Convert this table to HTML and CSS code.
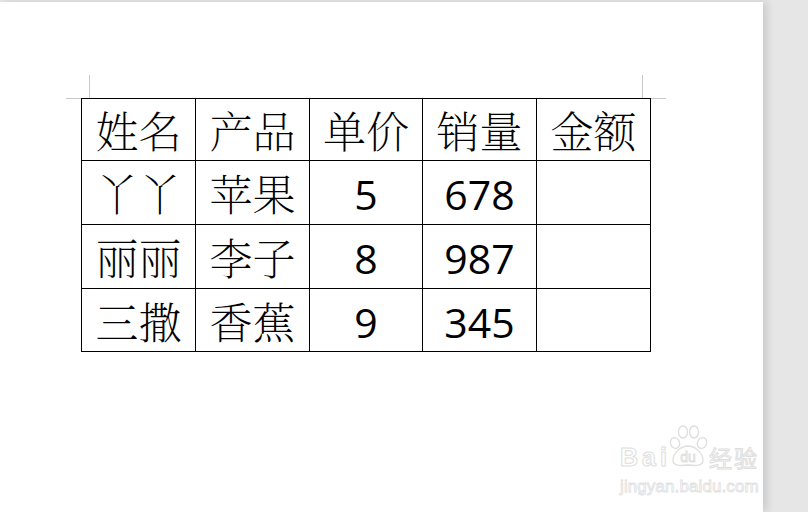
FILE: index.html
```html
<!DOCTYPE html>
<html lang="zh-CN">
<head>
<meta charset="utf-8">
<link rel="stylesheet" href="styles.css">
</head>
<body>
<div class="page">
  <div class="table-wrap">
    <span class="crop crop-lv"></span>
    <span class="crop crop-lh"></span>
    <span class="crop crop-rv"></span>
    <span class="crop crop-rh"></span>
    <table class="grid">
      <colgroup>
        <col class="c114"><col class="c114"><col class="c113"><col class="c114"><col class="c114">
      </colgroup>
      <tr class="row-head">
        <td class="zh">姓名</td><td class="zh">产品</td><td class="zh">单价</td><td class="zh">销量</td><td class="zh">金额</td>
      </tr>
      <tr>
        <td class="zh">丫丫</td><td class="zh">苹果</td><td class="num">5</td><td class="num">678</td><td></td>
      </tr>
      <tr>
        <td class="zh">丽丽</td><td class="zh">李子</td><td class="num">8</td><td class="num">987</td><td></td>
      </tr>
      <tr class="row-last">
        <td class="zh">三撒</td><td class="zh">香蕉</td><td class="num">9</td><td class="num">345</td><td></td>
      </tr>
    </table>
  </div>
  <div class="watermark">
    <div class="wm-top">
      <span class="wm-bai">Bai</span>
      <svg class="paw" width="42" height="44" viewBox="0 0 42 44">
        <g fill="#fff" stroke="#dedede" stroke-width="1.3">
          <ellipse cx="8" cy="19" rx="4.5" ry="5.5" transform="rotate(-20 8 19)"/>
          <ellipse cx="16" cy="8" rx="4.5" ry="6"/>
          <ellipse cx="27" cy="8" rx="4.5" ry="6"/>
          <ellipse cx="35" cy="19" rx="4.5" ry="5.5" transform="rotate(20 35 19)"/>
          <path d="M6 36 C6 29 14 22 21 22 C28 22 36 29 36 36 C36 42 29 42 21 41 C13 42 6 42 6 36 Z"/>
        </g>
        <text x="21" y="38" text-anchor="middle" class="du-text">du</text>
      </svg>
      <span class="wm-jy">经验</span>
    </div>
    <div class="wm-url">jingyan.baidu.com</div>
  </div>
</div>
</body>
</html>
```
FILE: styles.css
```css
html, body {
  margin: 0;
  padding: 0;
}
body {
  background: #e6e6e6;
  width: 808px;
  height: 512px;
  overflow: hidden;
}
.page {
  position: relative;
  margin-top: 2px;
  width: 763px;
  height: 510px;
  background: #ffffff;
  box-shadow: 4px 0 8px rgba(0,0,0,0.12);
  padding: 96px 0 0 81px;
  box-sizing: border-box;
}
.table-wrap {
  position: relative;
  width: 570px;
}
.grid {
  border-collapse: collapse;
  table-layout: fixed;
  width: 570px;
}
.c114 { width: 114px; }
.c113 { width: 113px; }
.grid td {
  border: 1px solid #000;
  height: 63px;
  padding: 0;
  text-align: center;
  vertical-align: middle;
  color: #000;
}
.grid .row-head td { height: 61px; }
.grid .row-last td { height: 62px; }
.grid td.num { height: 59px; padding-top: 4px; }
.grid .row-last td.num { height: 58px; }
.zh {
  font-family: "Noto Serif CJK SC", "Noto Sans CJK SC", serif;
  font-size: 43px;
  font-weight: 200;
  line-height: 1;
}
.num {
  font-family: "Open Sans", "Liberation Sans", sans-serif;
  font-size: 41px;
  line-height: 1;
}
.crop {
  position: absolute;
  background: #c8c8c8;
}
.crop-lv { left: 8px; top: -23px; width: 1px; height: 23px; }
.crop-lh { left: -15px; top: 0; width: 15px; height: 1px; }
.crop-rv { left: 561px; top: -23px; width: 1px; height: 23px; }
.crop-rh { left: 570px; top: 0; width: 15px; height: 1px; }

.watermark {
  position: absolute;
  left: 620px;
  top: 422px;
  width: 150px;
  color: #fff;
  font-family: "Liberation Sans", Arial, sans-serif;
}
.wm-top {
  display: flex;
  align-items: flex-end;
  height: 44px;
}
.wm-bai {
  font-size: 25px;
  font-weight: bold;
  -webkit-text-stroke: 1px #dedede;
  line-height: 1;
  letter-spacing: 4px;
  margin-bottom: -2px;
}
.paw {
  display: block;
  margin-left: -4px;
}
.du-text {
  font-family: "Liberation Sans", Arial, sans-serif;
  font-size: 14px;
  fill: #fff;
  stroke: #dedede;
  stroke-width: 0.9;
}
.wm-jy {
  font-family: "Noto Sans CJK SC", sans-serif;
  font-size: 23px;
  -webkit-text-stroke: 1px #dedede;
  line-height: 1;
  letter-spacing: 2px;
  margin-left: 0;
  margin-bottom: -1px;
}
.wm-url {
  margin-top: 10px;
  font-size: 17px;
  -webkit-text-stroke: 0.8px #dedede;
  letter-spacing: 0.1px;
  line-height: 1;
}
```
